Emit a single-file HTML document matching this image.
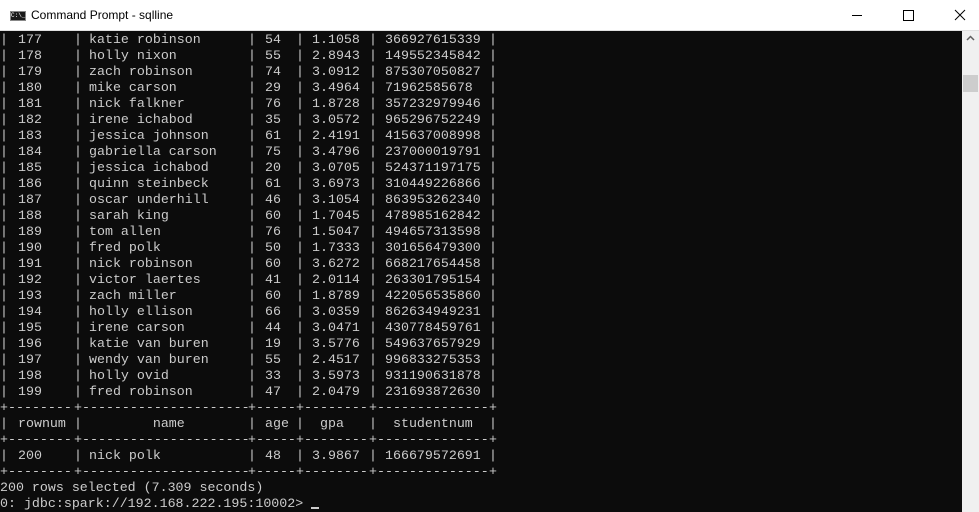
<!DOCTYPE html>
<html><head><meta charset="utf-8"><style>
body{margin:0;width:979px;height:512px;overflow:hidden;background:#0c0c0c;font-family:"Liberation Mono",monospace;position:relative}
#title{position:absolute;left:0;top:0;width:979px;height:31px;background:#fff;border-bottom:1px solid #e0e0e0;box-sizing:border-box;font-family:"Liberation Sans",sans-serif;font-size:12px;color:#000}
#title .t{position:absolute;left:31px;top:8px}
#title .ic{position:absolute;left:10px;top:11px;width:16px;height:10px;background:#1a1a1a;border:1px solid #888;box-sizing:border-box;color:#fff;font-size:6px;line-height:8px;font-family:"Liberation Mono",monospace}
.col{position:absolute;top:32px;margin:0;font-size:13.3px;line-height:16px;color:#cccccc;white-space:pre;font-family:"Liberation Mono",monospace}
.dash{position:absolute;height:16px;overflow:hidden;margin:0;font-size:13.3px;line-height:16px;color:#cccccc;white-space:pre;font-family:"Liberation Mono",monospace}
#sb{position:absolute;left:962px;top:31px;width:17px;height:481px;background:#f0f0f0}
</style></head><body>
<div id="title"><div class="ic">C:\_</div><div class="t">Command Prompt - sqlline</div>
<svg style="position:absolute;left:850px;top:8px" width="120" height="16"><line x1="2" y1="7.5" x2="12" y2="7.5" stroke="#000"/><rect x="53.5" y="2.5" width="10" height="10" fill="none" stroke="#000"/><path d="M105 2 L115 12 M115 2 L105 12" stroke="#000"/></svg></div>
<pre class="col" style="left:0px">|
|
|
|
|
|
|
|
|
|
|
|
|
|
|
|
|
|
|
|
|
|
|
+
|
+
|
+
200 rows selected (7.309 seconds)
0: jdbc:spark://192.168.222.195:10002&gt; <span style="display:inline-block;width:8px;height:2px;background:#ccc;vertical-align:-2px"></span></pre>
<pre class="col" style="left:74px">|
|
|
|
|
|
|
|
|
|
|
|
|
|
|
|
|
|
|
|
|
|
|
+
|
+
|
+</pre>
<pre class="col" style="left:248px">|
|
|
|
|
|
|
|
|
|
|
|
|
|
|
|
|
|
|
|
|
|
|
+
|
+
|
+</pre>
<pre class="col" style="left:296px">|
|
|
|
|
|
|
|
|
|
|
|
|
|
|
|
|
|
|
|
|
|
|
+
|
+
|
+</pre>
<pre class="col" style="left:369px">|
|
|
|
|
|
|
|
|
|
|
|
|
|
|
|
|
|
|
|
|
|
|
+
|
+
|
+</pre>
<pre class="col" style="left:489px">|
|
|
|
|
|
|
|
|
|
|
|
|
|
|
|
|
|
|
|
|
|
|
+
|
+
|
+</pre>
<pre class="col" style="left:18px">177
178
179
180
181
182
183
184
185
186
187
188
189
190
191
192
193
194
195
196
197
198
199

rownum

200</pre>
<pre class="col" style="left:89px">katie robinson
holly nixon
zach robinson
mike carson
nick falkner
irene ichabod
jessica johnson
gabriella carson
jessica ichabod
quinn steinbeck
oscar underhill
sarah king
tom allen
fred polk
nick robinson
victor laertes
zach miller
holly ellison
irene carson
katie van buren
wendy van buren
holly ovid
fred robinson

        name

nick polk</pre>
<pre class="col" style="left:265px">54
55
74
29
76
35
61
75
20
61
46
60
76
50
60
41
60
66
44
19
55
33
47

age

48</pre>
<pre class="col" style="left:312px">1.1058
2.8943
3.0912
3.4964
1.8728
3.0572
2.4191
3.4796
3.0705
3.6973
3.1054
1.7045
1.5047
1.7333
3.6272
2.0114
1.8789
3.0359
3.0471
3.5776
2.4517
3.5973
2.0479

 gpa

3.9867</pre>
<pre class="col" style="left:385px">366927615339
149552345842
875307050827
71962585678
357232979946
965296752249
415637008998
237000019791
524371197175
310449226866
863953262340
478985162842
494657313598
301656479300
668217654458
263301795154
422056535860
862634949231
430778459761
549637657929
996833275353
931190631878
231693872630

 studentnum

166679572691</pre>
<pre class="dash" style="left:8px;width:66px;top:400px">--------------------------</pre>
<pre class="dash" style="left:82px;width:166px;top:400px">------------------------------------</pre>
<pre class="dash" style="left:256px;width:40px;top:400px">----------</pre>
<pre class="dash" style="left:304px;width:65px;top:400px">----------</pre>
<pre class="dash" style="left:377px;width:112px;top:400px">------------------</pre>
<pre class="dash" style="left:8px;width:66px;top:432px">--------------------------</pre>
<pre class="dash" style="left:82px;width:166px;top:432px">------------------------------------</pre>
<pre class="dash" style="left:256px;width:40px;top:432px">----------</pre>
<pre class="dash" style="left:304px;width:65px;top:432px">----------</pre>
<pre class="dash" style="left:377px;width:112px;top:432px">------------------</pre>
<pre class="dash" style="left:8px;width:66px;top:464px">--------------------------</pre>
<pre class="dash" style="left:82px;width:166px;top:464px">------------------------------------</pre>
<pre class="dash" style="left:256px;width:40px;top:464px">----------</pre>
<pre class="dash" style="left:304px;width:65px;top:464px">----------</pre>
<pre class="dash" style="left:377px;width:112px;top:464px">------------------</pre>
<div id="sb"><svg style="position:absolute;left:4px;top:4px" width="9" height="6"><path d="M1 5 L4.5 1.5 L8 5" stroke="#606060" stroke-width="1.5" fill="none"/></svg><div style="position:absolute;left:1px;top:44px;width:15px;height:17px;background:#cdcdcd"></div></div>
</body></html>
